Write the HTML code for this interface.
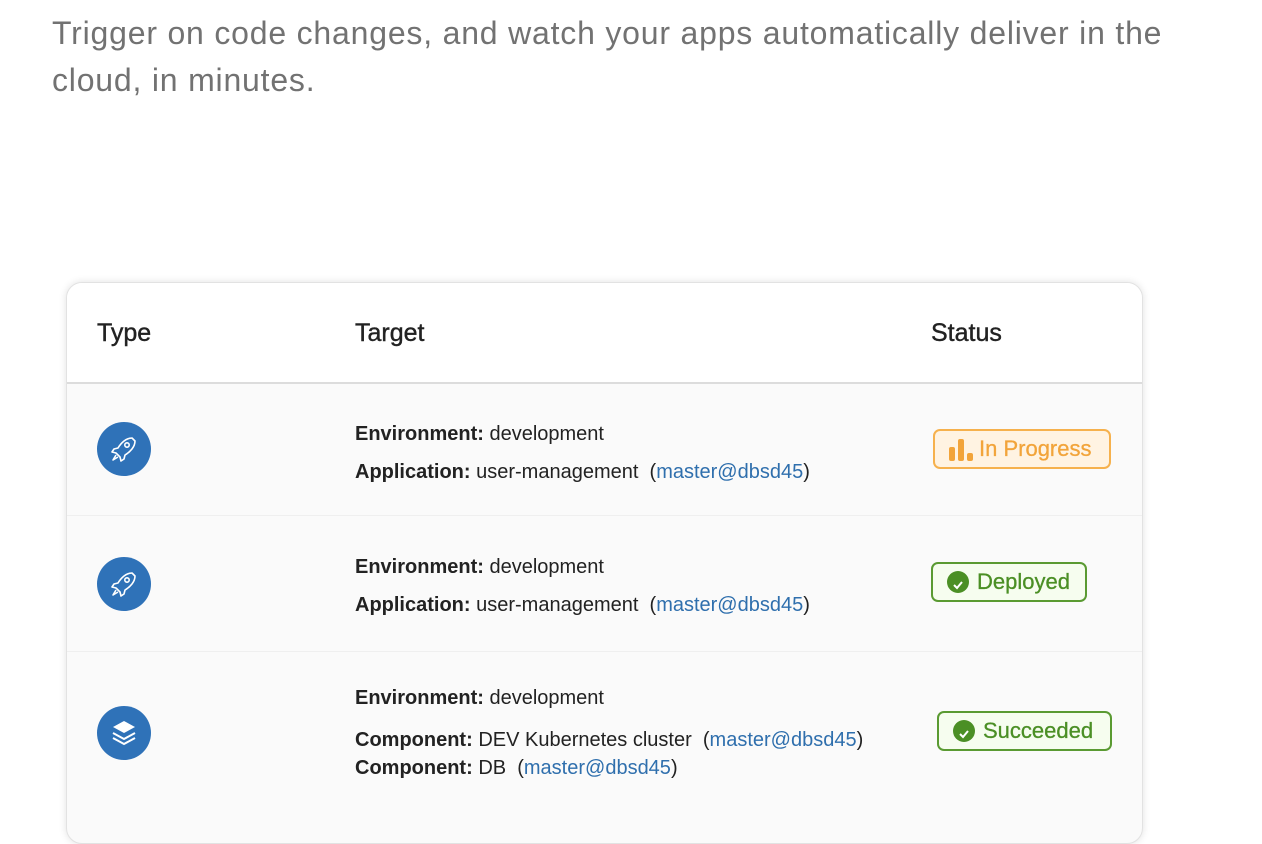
<!DOCTYPE html>
<html><head><style>
body{margin:0;width:1262px;height:806px;overflow:hidden;background:#fff;font-family:"Liberation Sans",sans-serif;position:relative}
.intro{position:absolute;left:52px;top:10px;width:1150px;font-size:32px;line-height:47px;color:#727272;letter-spacing:0.8px}
.card{position:absolute;left:66px;top:282px;width:1075px;height:560px;border:1px solid #e2e2e2;border-radius:16px;box-shadow:0 0 8px rgba(0,0,0,0.12);background:#fafafa;overflow:hidden}
.head{height:99px;background:#fff;border-bottom:2px solid #dcdcdc;position:relative}
.h{position:absolute;top:36px;font-size:25px;color:#222;-webkit-text-stroke:0.4px #222}
.row{position:absolute;left:0;width:100%;border-bottom:1px solid #efefef}
.ic{position:absolute;left:30px;width:54px;height:54px;border-radius:50%;background:#2f72b8}
.t{position:absolute;left:288px;font-size:20px;color:#222;line-height:38px}
.t b{font-weight:bold}
.t a{color:#2f6fad;text-decoration:none}
.badge{position:absolute;height:40px;border-radius:7px;font-size:22px;line-height:36px;box-sizing:border-box;padding-left:44px;-webkit-text-stroke:0.3px currentColor}
.or{border:2px solid #f6b14d;background:#fff3e2;color:#f2a43a}
.gr{border:2px solid #5a9a32;background:#f6fdef;color:#4b8f25}
.chk{position:absolute;left:14px;top:7px;width:22px;height:22px;border-radius:50%;background:#4b8f25}
</style></head><body>
<div class="intro">Trigger on code changes, and watch your apps automatically deliver in the cloud, in minutes.</div>
<div class="card">
 <div class="head"><span class="h" style="left:30px">Type</span><span class="h" style="left:288px">Target</span><span class="h" style="left:864px">Status</span></div>
 <div class="row" style="top:101px;height:131px">
  <div class="ic" style="top:38px"><svg width="54" height="54" viewBox="0 0 54 54" fill="none" stroke="#fff" stroke-width="1.6" stroke-linejoin="round"><path d="M35 16c-6 0-11 5-14 10l-4 1-2 3 4 1 4 4 1 4 3-2 1-4c5-3 10-8 10-14z"/><circle cx="30" cy="23" r="2.2"/><path d="M19 33l-3 5 5-3"/></svg></div>
  <div class="t" style="top:31px"><b>Environment:</b> development<br><b>Application:</b> user-management &nbsp;(<a>master@dbsd45</a>)</div>
  <div class="badge or" style="left:866px;top:45px;width:178px"><svg style="position:absolute;left:14px;top:8px" width="26" height="22"><rect x="0" y="8" width="6" height="14" rx="2" fill="#f2a43a"/><rect x="9" y="0" width="6" height="22" rx="2" fill="#f2a43a"/><rect x="18" y="14" width="6" height="8" rx="2" fill="#f2a43a"/></svg>In Progress</div>
 </div>
 <div class="row" style="top:232px;height:136px">
  <div class="ic" style="top:42px"><svg width="54" height="54" viewBox="0 0 54 54" fill="none" stroke="#fff" stroke-width="1.6" stroke-linejoin="round"><path d="M35 16c-6 0-11 5-14 10l-4 1-2 3 4 1 4 4 1 4 3-2 1-4c5-3 10-8 10-14z"/><circle cx="30" cy="23" r="2.2"/><path d="M19 33l-3 5 5-3"/></svg></div>
  <div class="t" style="top:33px"><b>Environment:</b> development<br><b>Application:</b> user-management &nbsp;(<a>master@dbsd45</a>)</div>
  <div class="badge gr" style="left:864px;top:47px;width:156px"><span class="chk"><svg width="22" height="22"><path d="M7 11l3 3 5-6" stroke="#fff" stroke-width="2" fill="none"/></svg></span>Deployed</div>
 </div>
 <div class="row" style="top:368px;height:200px;border:none">
  <div class="ic" style="top:55px"><svg width="54" height="54" viewBox="0 0 54 54" fill="none"><path d="M27 15l11 6-11 6-11-6z" fill="#fff"/><path d="M16 27l11 6 11-6M16 32l11 6 11-6" stroke="#fff" stroke-width="2"/></svg></div>
  <div class="t" style="top:33px;line-height:28px"><b>Environment:</b> development<br><span style="display:block;height:14px"></span><b>Component:</b> DEV Kubernetes cluster &nbsp;(<a>master@dbsd45</a>)<br><b>Component:</b> DB &nbsp;(<a>master@dbsd45</a>)</div>
  <div class="badge gr" style="left:870px;top:60px;width:175px"><span class="chk"><svg width="22" height="22"><path d="M7 11l3 3 5-6" stroke="#fff" stroke-width="2" fill="none"/></svg></span>Succeeded</div>
 </div>
</div>
</body></html>
